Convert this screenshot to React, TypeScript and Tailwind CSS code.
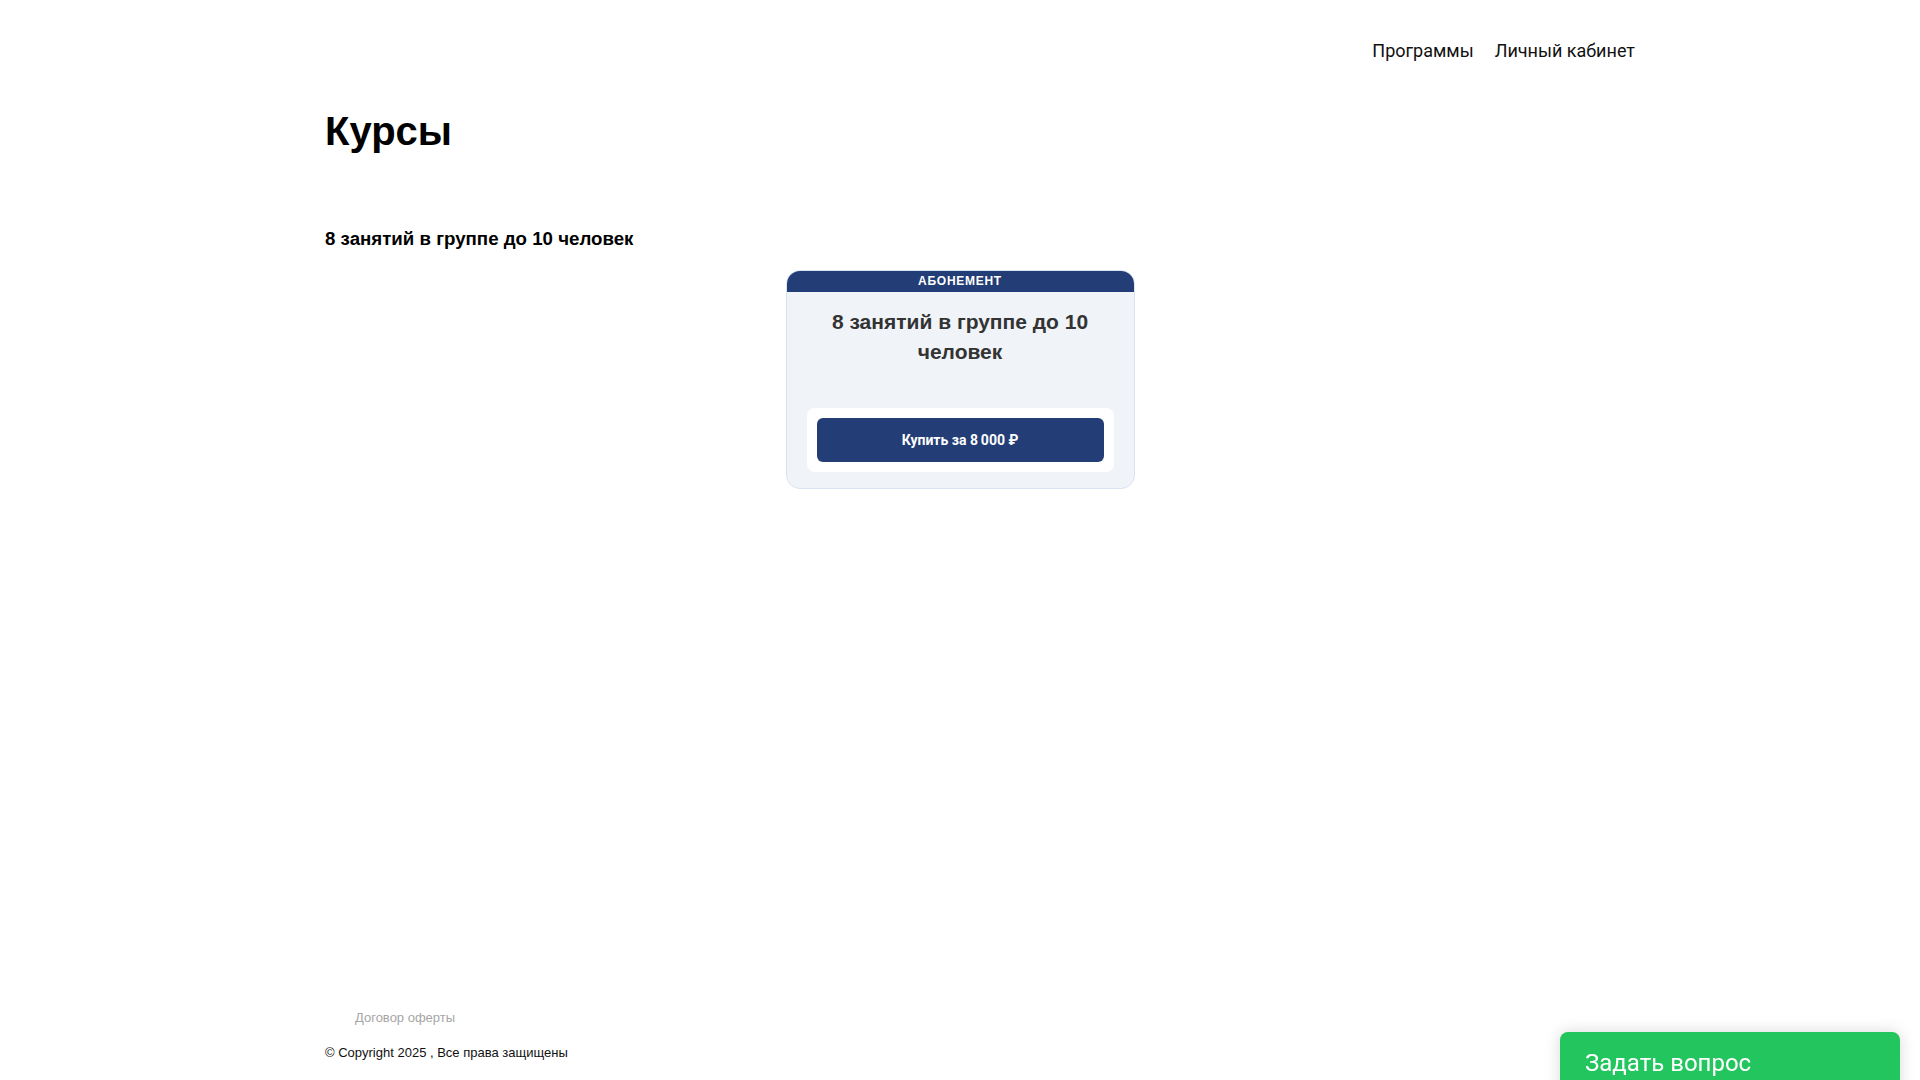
export default function App() {
  return (
    <div className="min-h-screen flex flex-col bg-white font-['Liberation_Sans',Arial,sans-serif] text-black">
      <header className="flex justify-end pt-[39px] pr-[285px]">
        <nav className="flex gap-[21px] font-['Roboto',sans-serif] text-[18px] leading-[24px] text-[#111]">
          <a href="#">Программы</a>
          <a href="#">Личный кабинет</a>
        </nav>
      </header>

      <main className="w-[1270px] mx-auto">
        <h1 className="mt-[43px] text-[40px] leading-[50px] font-bold">Курсы</h1>

        <h2 className="mt-[71px] text-[18.7px] leading-[24px] font-bold">
          8 занятий в группе до 10 человек
        </h2>

        <div className="mt-[19px] flex justify-center">
          <div className="w-[349px] rounded-[14px] border border-[#d9e4f2] bg-[#f0f4f9] overflow-hidden">
            <div className="h-[21px] bg-[#233d77] text-white text-[12px] leading-[21px] font-bold tracking-[0.06em] text-center">
              АБОНЕМЕНТ
            </div>
            <div className="px-[20px] pt-[15px] pb-[16px]">
              <h3 className="text-[21px] leading-[30px] font-bold text-[#333] text-center">
                8 занятий в группе до 10 человек
              </h3>
              <div className="mt-[41px] rounded-[8px] bg-white p-[10px]">
                <button className="w-full h-[44px] rounded-[6px] bg-[#233d77] text-white text-[14px] font-bold font-['Roboto',sans-serif]">
                  Купить за 8&#8201;000 ₽
                </button>
              </div>
            </div>
          </div>
        </div>
      </main>

      <footer className="mt-auto w-[1270px] mx-auto pb-[19px]">
        <a href="#" className="block pl-[30px] text-[13px] leading-[16px] text-[#a6a6a6]">
          Договор оферты
        </a>
        <p className="mt-[19px] text-[13px] leading-[16px] text-[#111]">
          © Copyright 2025 , Все права защищены
        </p>
      </footer>

      <button className="fixed right-[20px] bottom-[-22px] w-[340px] h-[70px] rounded-[8px] bg-[#22c55e] text-white text-left pl-[25px] pt-[16px] font-['Roboto',sans-serif] text-[24px] leading-[30px] shadow-[0_0_16px_rgba(0,0,0,0.15)] flex items-start">
        <span className="block">Задать вопрос</span>
      </button>
    </div>
  );
}
